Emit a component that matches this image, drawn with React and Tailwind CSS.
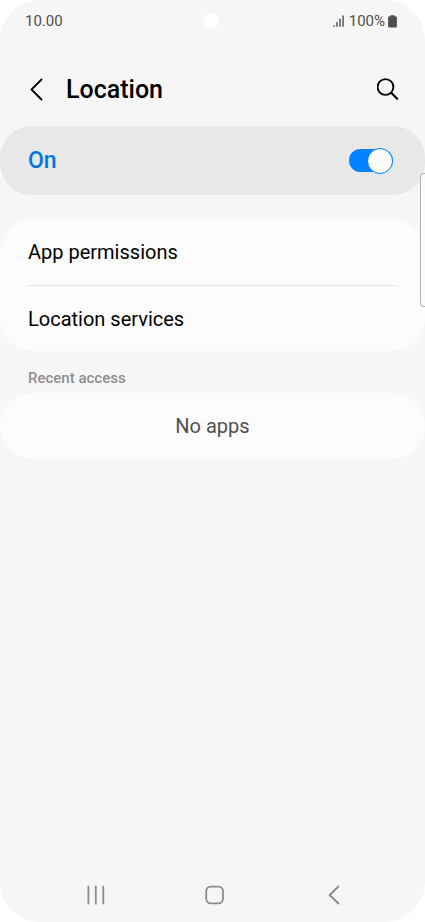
import { useState } from "react";

function StatusBar() {
  return (
    <div className="grid h-[42px] grid-cols-[1fr_auto_1fr] items-center pl-[25px] pr-7 text-[#4f4f4f]">
      <span className="text-[15px] leading-5">10.00</span>
      <span className="h-4 w-4 rounded-full bg-white" />
      <div className="flex items-center justify-end">
        <svg width="12" height="12" viewBox="0 0 12 12" className="mr-1" aria-hidden="true">
          <g stroke="currentColor" strokeWidth="1.4" strokeLinecap="round">
            <path d="M1 10.6V11.2" />
            <path d="M4 7.4V11.2" />
            <path d="M7 4.2V11.2" />
            <path d="M10.1 1V11.2" />
          </g>
        </svg>
        <span className="text-[15px] leading-5">100%</span>
        <svg width="9" height="13" viewBox="0 0 9 13" className="ml-[3px]" aria-hidden="true">
          <path
            d="M3 0.2H6Q6.7 0.2 6.7 1.3H7.4Q8.9 1.3 8.9 2.8V11.2Q8.9 12.6 7.4 12.6H1.6Q0.1 12.6 0.1 11.2V2.8Q0.1 1.3 1.6 1.3H2.3Q2.3 0.2 3 0.2Z"
            fill="currentColor"
          />
        </svg>
      </div>
    </div>
  );
}

function Header() {
  return (
    <header className="flex h-[84px] items-center px-6 pt-[11px]">
      <button aria-label="Back" className="flex h-6 w-6 items-center justify-center">
        <svg width="24" height="24" viewBox="0 0 24 24" fill="none">
          <path
            d="M17.5 1.5L7.5 11.5L17.5 21.5"
            stroke="#000"
            strokeWidth="1.8"
            strokeLinecap="round"
            strokeLinejoin="round"
          />
        </svg>
      </button>
      <h1 className="ml-[18px] text-[25px] font-medium leading-[33px]">Location</h1>
      <button aria-label="Search" className="ml-auto flex h-6 w-6 items-center justify-center">
        <svg width="24" height="24" viewBox="0 0 24 24" fill="none">
          <circle cx="8.5" cy="9" r="7.9" stroke="#000" strokeWidth="1.9" />
          <path d="M14.2 14.8L20.2 20.8" stroke="#000" strokeWidth="2.1" strokeLinecap="round" />
        </svg>
      </button>
    </header>
  );
}

function LocationToggle() {
  const [enabled, setEnabled] = useState(true);

  return (
    <label className="flex h-[69px] cursor-pointer items-center justify-between rounded-[32px] bg-[#e8e8e8] pl-7 pr-8">
      <span className="text-[23px] font-medium leading-[33px] text-[#0077e4]">
        {enabled ? "On" : "Off"}
      </span>
      <input
        type="checkbox"
        className="peer sr-only"
        checked={enabled}
        onChange={(e) => setEnabled(e.target.checked)}
      />
      <span className="flex h-[23px] w-11 items-center rounded-full bg-[#9a9a9a] peer-checked:justify-end peer-checked:bg-[#0381fe]">
        <span className="h-[26px] w-[26px] shrink-0 rounded-full border border-[#0381fe] bg-[#fcfcfc]" />
      </span>
    </label>
  );
}

function NavBar() {
  return (
    <nav className="mt-auto grid h-[54px] grid-cols-3 items-center pl-9 pr-8 text-[#8c8c8c]">
      <button aria-label="Recent apps" className="flex justify-center">
        <svg width="20" height="20" viewBox="0 0 20 20" fill="none">
          <path
            d="M2.4 1.5V18.5M9.8 1.5V18.5M17.3 1.5V18.5"
            stroke="currentColor"
            strokeWidth="1.8"
            strokeLinecap="round"
          />
        </svg>
      </button>
      <button aria-label="Home" className="flex justify-center">
        <svg width="20" height="20" viewBox="0 0 20 20" fill="none">
          <rect x="1.2" y="1.6" width="16.8" height="16.8" rx="4.8" stroke="currentColor" strokeWidth="1.8" />
        </svg>
      </button>
      <button aria-label="Back" className="flex justify-center">
        <svg width="20" height="20" viewBox="0 0 20 20" fill="none">
          <path
            d="M14.4 1.5L5.6 10L14.4 18.5"
            stroke="currentColor"
            strokeWidth="1.8"
            strokeLinecap="round"
            strokeLinejoin="round"
          />
        </svg>
      </button>
    </nav>
  );
}

function App() {
  return (
    <div className="min-h-screen bg-white font-[Roboto,sans-serif] text-black">
      <div className="relative flex min-h-screen flex-col overflow-hidden rounded-[40px] bg-[#f6f6f6]">
        <StatusBar />
        <Header />

        <main>
          <LocationToggle />

          <ul className="mt-6 rounded-[32px] bg-[#fcfcfc] px-7 text-xl">
            <li className="border-b border-[#e4e4e4]">
              <button className="h-[66px] w-full text-left">App permissions</button>
            </li>
            <li>
              <button className="h-[65px] w-full text-left">Location services</button>
            </li>
          </ul>

          <section>
            <h2 className="flex h-[42px] items-center px-7 pt-3 text-[15px] font-medium leading-5 text-[#8f8f8f]">
              Recent access
            </h2>
            <p className="flex h-[66px] items-center justify-center rounded-[32px] bg-[#fcfcfc] text-xl text-[#4f4f4f]">
              No apps
            </p>
          </section>
        </main>

        <NavBar />

        {/* edge panel handle, half of it is off screen */}
        <div className="absolute -right-1 top-[173px] h-[134px] w-[9px] rounded-[4px] border border-[#b0b0b0] bg-[#fafafa]" />
      </div>
    </div>
  );
}

export default App;
